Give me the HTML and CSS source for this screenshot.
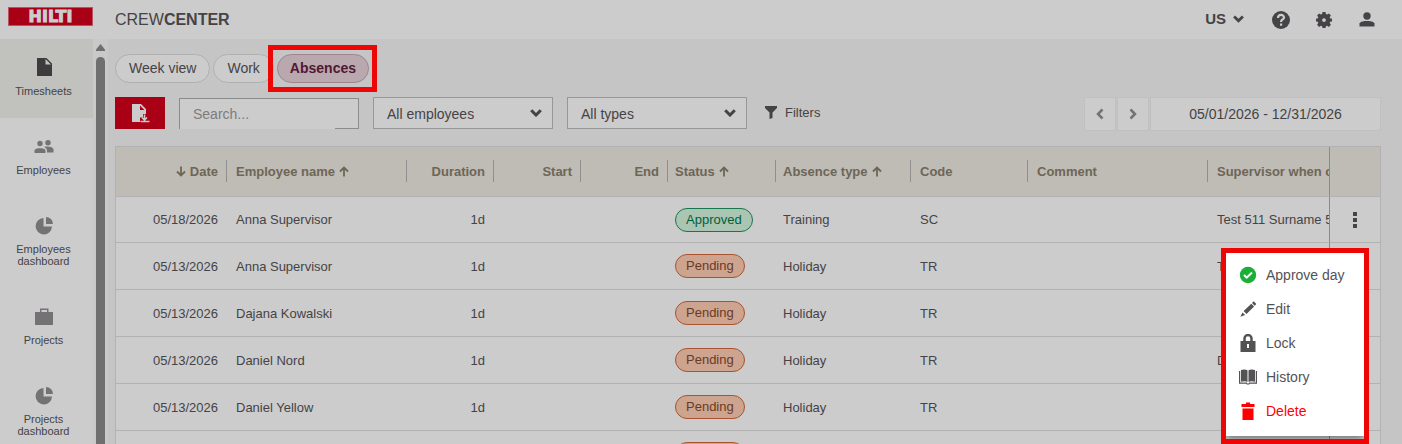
FILE: index.html
```html
<!DOCTYPE html>
<html lang="en">
<head>
    <meta charset="UTF-8">
    <meta name="viewport" content="width=device-width, initial-scale=1.0">
    <title>Crewcenter - Absences</title>
    <link rel="stylesheet" href="styles.css">
</head>
<body>

    <!-- Shared icons -->
    <svg class="sprite" width="0" height="0">
        <symbol id="i-pie" viewBox="0 0 18 18"><path d="M8.500 1v8.500H17A8.200 8.200 0 1 1 8.500 1z"/><path d="M11 0a7 7 0 0 1 7 7h-7z"/></symbol>
        <symbol id="i-chevron" viewBox="0 0 12 8"><path d="M1.200 1.300L6 6l4.800-4.700" fill="none" stroke="currentColor" stroke-width="3"/></symbol>
        <symbol id="i-up" viewBox="0 0 10 11"><path d="M5 10.500V1.500M1 5.500l4-4 4 4" fill="none" stroke="currentColor" stroke-width="1.800"/></symbol>
        <symbol id="i-down" viewBox="0 0 10 11"><path d="M5 0.500v9M1 5.500l4 4 4-4" fill="none" stroke="currentColor" stroke-width="1.800"/></symbol>
    </svg>

    <header class="topbar">
        <a href="#" class="logo">HILTI</a>
        <div class="product">CREW<b>CENTER</b></div>
        <div class="top-actions">
            <button class="region">US <svg width="11" height="8"><use href="#i-chevron"/></svg></button>
            <button class="icon-btn" aria-label="Help">
                <svg width="18" height="18" viewBox="0 0 18 18"><circle cx="9" cy="9" r="9" fill="currentColor"/><path d="M6 7c0-4 6-4 6-.5C12 8.500 9 8.500 9 11" fill="none" stroke="#ccc" stroke-width="2.200"/><rect x="8" y="12.500" width="2.200" height="2.200" fill="#ccc"/></svg>
            </button>
            <button class="icon-btn" aria-label="Settings">
                <svg width="18" height="18" viewBox="0 0 18 18" fill="currentColor"><path fill-rule="evenodd" d="M7.500 1h3l.4 2.100 1.200.5 1.800-1.200 2 2-1.200 1.800.5 1.200L17 7.500v3l-1.800.3-.5 1.300 1.200 1.700-2 2.100-1.800-1.200-1.200.5-.4 1.800h-3l-.4-1.800-1.200-.5-1.800 1.200-2-2.100 1.200-1.700-.5-1.300L1 10.500v-3l1.800-.1.500-1.200L2.100 4.400l2-2 1.800 1.200 1.200-.5zM9 7.200a1.900 1.900 0 1 0 0 3.800 1.900 1.900 0 0 0 0-3.800z"/></svg>
            </button>
            <button class="icon-btn" aria-label="Account">
                <svg width="18" height="18" viewBox="0 0 18 18" fill="currentColor"><circle cx="9" cy="5" r="3.700"/><path d="M1.500 15.500v-3C2.500 10.300 6 10 9 10s6.500.3 7.500 2.500v3z"/></svg>
            </button>
        </div>
    </header>

    <div class="layout">
        <!-- Side menu -->
        <nav class="sidebar">
            <a href="#" class="side-item active">
                <svg width="20" height="20" viewBox="0 0 20 20" fill="currentColor"><path fill-rule="evenodd" d="M3 0h9.500L18 5.500V18H3zM11.500 1v5.500H17z"/></svg>
                Timesheets
            </a>
            <a href="#" class="side-item">
                <svg width="20" height="20" viewBox="0 0 20 20" fill="currentColor"><circle cx="6" cy="6.500" r="2.700"/><circle cx="14" cy="5.800" r="2.700"/><path d="M.5 16v-3c1-2.500 10-2.500 11 0v3zM10 10c3-.8 8-.5 9.500 2v3.500h-6.500V13c-.3-1.500-1.500-2.500-3-3z"/></svg>
                Employees
            </a>
            <a href="#" class="side-item">
                <svg width="18" height="20"><use href="#i-pie"/></svg>
                Employees dashboard
            </a>
            <a href="#" class="side-item">
                <svg width="20" height="20" viewBox="0 0 20 20" fill="currentColor"><path fill-rule="evenodd" d="M6 5V1.500h8.500V5H19v13H1V5zM7.500 5h5.500V3H7.500z"/></svg>
                Projects
            </a>
            <a href="#" class="side-item">
                <svg width="18" height="20"><use href="#i-pie"/></svg>
                Projects dashboard
            </a>
        </nav>
        <div class="scrollbar">
            <svg width="9" height="7" viewBox="0 0 9 7"><path d="M4.500 0L9 5.500V7H0V5.500z"/></svg>
            <div class="thumb"></div>
        </div>

        <main class="content">
            <div class="tabs">
                <button class="tab">Week view</button>
                <button class="tab">Work</button>
                <div class="marked"><button class="tab selected">Absences</button></div>
            </div>

            <div class="toolbar">
                <button class="export" aria-label="Export">
                    <svg width="20" height="20" viewBox="0 0 20 20" fill="#ccc"><path fill-rule="evenodd" d="M2 1h9l5 5v5h-3v3.500H10V19H2zM10 2.500V7h4.500z"/><path d="M14.500 11.500v5M12 14.500l2.500 2.500 2.500-2.500M10.500 18.500h9" fill="none" stroke="#ccc" stroke-width="1.600"/></svg>
                </button>
                <div class="search"><input type="text" aria-label="Search" placeholder="Search..."></div>
                <div class="dropdown">
                    <select aria-label="Employees"><option>All employees</option></select>
                    <svg width="12" height="8"><use href="#i-chevron"/></svg>
                </div>
                <div class="dropdown">
                    <select aria-label="Types"><option>All types</option></select>
                    <svg width="12" height="8"><use href="#i-chevron"/></svg>
                </div>
                <button class="filters">
                    <svg width="12" height="13" viewBox="0 0 12 13" fill="currentColor"><path d="M0 0h12v2L7.500 6.500V12l-3 1V6.500L0 2z"/></svg>
                    Filters
                </button>
                <div class="period">
                    <button class="step" aria-label="Previous"><svg width="8" height="12" viewBox="0 0 8 12"><path d="M6.500 1.500L2 6l4.500 4.500"/></svg></button>
                    <button class="step" aria-label="Next"><svg width="8" height="12" viewBox="0 0 8 12"><path d="M1.500 1.500L6 6l-4.500 4.500"/></svg></button>
                    <button class="range">05/01/2026 - 12/31/2026</button>
                </div>
            </div>

            <div class="table-wrap">
                <table class="absences">
                    <colgroup>
                        <col class="c-date"><col class="c-name"><col class="c-time"><col class="c-time"><col class="c-time"><col class="c-status"><col class="c-type"><col class="c-code"><col class="c-name"><col><col class="c-menu">
                    </colgroup>
                    <thead>
                        <tr>
                            <th class="num"><span><svg width="10" height="11"><use href="#i-down"/></svg> Date</span></th>
                            <th><span>Employee name <svg width="10" height="11"><use href="#i-up"/></svg></span></th>
                            <th class="num"><span>Duration</span></th>
                            <th class="num"><span>Start</span></th>
                            <th class="num"><span>End</span></th>
                            <th class="tight"><span>Status <svg width="10" height="11"><use href="#i-up"/></svg></span></th>
                            <th class="tight"><span>Absence type <svg width="10" height="11"><use href="#i-up"/></svg></span></th>
                            <th><span>Code</span></th>
                            <th><span>Comment</span></th>
                            <th class="last">Supervisor when created</th>
                            <th class="menu-cell"></th>
                        </tr>
                    </thead>
                    <tbody>
                        <tr>
                            <td class="num">05/18/2026</td><td>Anna Supervisor</td><td class="num">1d</td><td></td><td></td>
                            <td class="tight"><span class="badge approved">Approved</span></td><td class="tight">Training</td><td>SC</td><td></td><td class="last">Test 511 Surname 511</td>
                            <td class="menu-cell"><button class="dots" aria-label="Row menu"><svg width="4" height="16" viewBox="0 0 4 16" fill="currentColor"><path d="M0 0h4v4H0zM0 6h4v4H0zM0 12h4v4H0z"/></svg></button></td>
                        </tr>
                        <tr>
                            <td class="num">05/13/2026</td><td>Anna Supervisor</td><td class="num">1d</td><td></td><td></td>
                            <td class="tight"><span class="badge pending">Pending</span></td><td class="tight">Holiday</td><td>TR</td><td></td><td class="last">Test 511 Surname 511</td><td class="menu-cell"></td>
                        </tr>
                        <tr>
                            <td class="num">05/13/2026</td><td>Dajana Kowalski</td><td class="num">1d</td><td></td><td></td>
                            <td class="tight"><span class="badge pending">Pending</span></td><td class="tight">Holiday</td><td>TR</td><td></td><td class="last"></td><td class="menu-cell"></td>
                        </tr>
                        <tr>
                            <td class="num">05/13/2026</td><td>Daniel Nord</td><td class="num">1d</td><td></td><td></td>
                            <td class="tight"><span class="badge pending">Pending</span></td><td class="tight">Holiday</td><td>TR</td><td></td><td class="last">Dajana Kowalski</td><td class="menu-cell"></td>
                        </tr>
                        <tr>
                            <td class="num">05/13/2026</td><td>Daniel Yellow</td><td class="num">1d</td><td></td><td></td>
                            <td class="tight"><span class="badge pending">Pending</span></td><td class="tight">Holiday</td><td>TR</td><td></td><td class="last"></td><td class="menu-cell"></td>
                        </tr>
                        <tr>
                            <td></td><td></td><td></td><td></td><td></td>
                            <td class="tight"><span class="badge pending">Pending</span></td><td></td><td></td><td></td><td class="last"></td><td class="menu-cell"></td>
                        </tr>
                    </tbody>
                </table>

                <!-- Row menu -->
                <div class="popup">
                    <div class="popup-list">
                        <button class="option">
                            <svg width="18" height="18" viewBox="0 0 18 18"><circle cx="9" cy="9" r="8.200" fill="#1aaf37"/><path d="M5 9l2.700 2.700L13 6.500" fill="none" stroke="#fff" stroke-width="2"/></svg>
                            Approve day
                        </button>
                        <button class="option">
                            <svg width="18" height="18" viewBox="0 0 18 18" fill="currentColor"><path d="M13 3L14.800 1.200l2.500 2.800-1.600 1.700zM12.300 3.700l2.800 2.800L7.500 14l-2.900-2.900zM3.500 12.500l2.600 2.600-4.800 1.700z"/></svg>
                            Edit
                        </button>
                        <button class="option">
                            <svg width="18" height="18" viewBox="0 0 18 18" fill="currentColor"><path fill-rule="evenodd" d="M1.500 7H16.500v11h-15zM8 10v4h2v-4z"/><path d="M5.500 8V4.500a3.500 3.500 0 0 1 7 0V8" fill="none" stroke="currentColor" stroke-width="2.500"/></svg>
                            Lock
                        </button>
                        <button class="option">
                            <svg width="18" height="18" viewBox="0 0 18 18" fill="currentColor"><path d="M2 2c2-.8 5-.8 6.500.3V14C7 13 4 13 2 13.800zM16 2c-2-.8-5-.8-6.500.3V14c1.500-1 4.500-1 6.500-.2z"/><path d="M.6 3v12.200H7.500L8 16h2l.5-.8h6.900V3" fill="none" stroke="currentColor" stroke-width="1.200"/></svg>
                            History
                        </button>
                        <button class="option delete">
                            <svg width="18" height="18" viewBox="0 0 18 18" fill="currentColor"><path d="M2.500 2H7V.5h4V2h4.500v3h-13zM3.500 6.500h11V18h-11z"/></svg>
                            Delete
                        </button>
                    </div>
                </div>
            </div>
        </main>
    </div>

</body>
</html>
```

FILE: styles.css
```css
/* General */
* {
    box-sizing: border-box;
}

body {
    margin: 0;
    height: 100vh;
    display: flex;
    flex-direction: column;
    overflow: hidden;
    background-color: #c5c5c5;
    color: #454346;
    font-family: "Liberation Sans", Arial, sans-serif;
    font-size: 13px;
}

button,
input,
select {
    font: inherit;
    color: inherit;
    margin: 0;
}

button {
    display: flex;
    align-items: center;
    padding: 0;
    border: none;
    background: none;
    cursor: pointer;
}

svg {
    flex: none;
}

.sprite {
    position: absolute;
}

/* Top bar */
.topbar {
    display: flex;
    align-items: center;
    height: 39px;
    flex: none;
    padding: 0 26px 0 8px;
    background-color: #cccccc;
}

.logo {
    display: flex;
    align-items: center;
    justify-content: center;
    width: 85px;
    height: 19px;
    margin-right: 22px;
    margin-bottom: 6px;
    border: 1px solid #b8545f;
    background-color: #a90016;
    color: #cccccc;
    font-family: "DejaVu Sans", Verdana, sans-serif;
    font-size: 16px;
    font-weight: bold;
    line-height: 17px;
    -webkit-text-stroke: 1px #cccccc;
    text-decoration: none;
}

.product {
    font-size: 16px;
}

.top-actions {
    display: flex;
    align-items: center;
    gap: 25px;
    margin-left: auto;
}

.region {
    gap: 7px;
    margin-right: 3px;
    padding-bottom: 2px;
    font-size: 15px;
    font-weight: bold;
}

/* Side menu */
.layout {
    display: flex;
    flex: 1;
    min-height: 0;
}

.sidebar {
    width: 93px;
    flex: none;
    overflow: hidden;
    background-color: #cccccc;
}

.side-item {
    display: flex;
    flex-direction: column;
    align-items: center;
    gap: 7px;
    padding: 19px 14px 21px 8px;
    font-size: 11px;
    line-height: 12px;
    text-align: center;
    text-decoration: none;
    color: #454346;
}

.side-item svg {
    fill: #747274;
    color: #747274;
}

.side-item.active {
    background-color: #c1c1bd;
}

.side-item.active svg {
    fill: #3d3b3e;
}

.scrollbar {
    display: flex;
    flex-direction: column;
    align-items: center;
    gap: 6px;
    width: 15px;
    flex: none;
    padding-top: 5px;
    background-color: #c9c9c9;
    fill: #6f6f6f;
}

.thumb {
    width: 9px;
    flex: 1;
    border-radius: 5px 5px 0 0;
    background-color: #6f6f6f;
}

/* Main content */
.content {
    flex: 1;
    min-width: 0;
    padding: 15px 21px 0 7px;
    overflow: hidden;
}

.tabs {
    display: flex;
    gap: 3px;
    margin-bottom: 14px;
}

.tab {
    height: 29px;
    padding: 0 13px 2px;
    border: 1px solid #b0b0b0;
    border-radius: 15px;
    background-color: #cccccc;
    font-size: 14px;
}

.tab.selected {
    padding: 0 12px 2px;
    border-color: #9e8590;
    background-color: #b9a9af;
    color: #521732;
    font-weight: bold;
}

.marked {
    position: relative;
}

.marked::after {
    content: "";
    position: absolute;
    inset: -9px -8px -9px -9px;
    border: 5px solid #ec0606;
    pointer-events: none;
}

/* Toolbar */
.toolbar {
    display: flex;
    gap: 14px;
    margin-bottom: 17px;
}

.export {
    justify-content: center;
    width: 50px;
    height: 32px;
    background-color: #a90016;
}

.search {
    position: relative;
    width: 180px;
    height: 31px;
    margin-top: 1px;
}

.search input {
    width: 100%;
    height: 100%;
    padding: 0 13px;
    border: 1px solid #8c8c8c;
    border-bottom: none;
    border-radius: 0;
    background-color: #cccccc;
    font-size: 14px;
}

.search input::placeholder {
    color: #7d7d7d;
}

.search::after {
    content: "";
    position: absolute;
    right: 0;
    bottom: 0;
    width: 24px;
    height: 1px;
    background-color: #8c8c8c;
}

.dropdown {
    position: relative;
    width: 180px;
    height: 32px;
}

.dropdown + .dropdown {
    margin-right: 4px;
}

.dropdown select {
    width: 100%;
    height: 100%;
    padding: 2px 13px 0;
    border: 1px solid #989898;
    border-radius: 0;
    background-color: #cccccc;
    font-size: 14px;
    appearance: none;
}

.dropdown svg {
    position: absolute;
    right: 11px;
    top: 12px;
    pointer-events: none;
}

.filters {
    gap: 8px;
    padding-bottom: 1px;
}

.period {
    display: flex;
    gap: 1px;
    margin-bottom: -2px;
    margin-left: auto;
}

.step,
.range {
    justify-content: center;
    height: 34px;
    border: 1px solid #c0c0c0;
    background-color: #cccccc;
}

.step {
    width: 32px;
}

.step path {
    fill: none;
    stroke: #747274;
    stroke-width: 2.5;
}

.range {
    width: 231px;
    font-size: 14px;
}

/* Table */
.table-wrap {
    position: relative;
}

.absences {
    width: 100%;
    border: 1px solid #b2b2b2;
    border-collapse: separate;
    border-spacing: 0;
    table-layout: fixed;
    background-color: #cccccc;
}

.c-date { width: 111px; }
.c-name { width: 180px; }
.c-time { width: 87px; }
.c-status { width: 108px; }
.c-type { width: 135px; }
.c-code { width: 117px; }
.c-menu { width: 51px; }

.absences th,
.absences td {
    padding: 0;
    border-bottom: 1px solid #b2b2b2;
    text-align: left;
    white-space: nowrap;
    overflow: hidden;
}

.absences td {
    height: 47px;
    padding: 0 9px;
}

.absences tbody tr:first-child td {
    height: 46px;
}

.absences th {
    height: 50px;
    background-color: #bfbbb5;
    color: #6d6656;
}

.absences th span {
    display: flex;
    align-items: center;
    gap: 4px;
    height: 22px;
    margin-bottom: 2px;
    padding: 2px 8px 0 9px;
    border-right: 1px solid #8f8f8f;
}

.absences td.tight,
.absences .tight span:not(.badge) {
    padding-left: 7px;
}

.absences .num {
    text-align: right;
}

.absences .num span {
    justify-content: flex-end;
}

.absences .last {
    padding: 0 0 0 9px;
}

.absences .menu-cell {
    padding: 0;
    border-left: 1px solid #8a8a8a;
}

.dots {
    width: 100%;
    justify-content: center;
}

.badge {
    display: inline-block;
    padding: 0 10px;
    border: 1px solid;
    border-radius: 12px;
    line-height: 22px;
}

.badge.approved {
    border-color: #16754d;
    background-color: #abc5b3;
    color: #00603d;
}

.badge.pending {
    border-color: #a9532f;
    background-color: #cda48f;
    color: #6b3a26;
}

/* Row menu */
.popup {
    position: absolute;
    top: 102px;
    right: 12px;
    width: 148px;
    padding-bottom: 3px;
    border: 5px solid #ec0606;
}

.popup-list {
    padding: 5px 0 8px;
    background-color: #ffffff;
    box-shadow: 0 2px 8px rgba(0, 0, 0, 0.5);
    clip-path: inset(0 0 -3px 0);
}

.option {
    width: 100%;
    height: 34px;
    gap: 9px;
    padding-left: 13px;
    color: #545255;
    font-size: 14px;
}

.option.delete {
    color: #ff0000;
}
```
